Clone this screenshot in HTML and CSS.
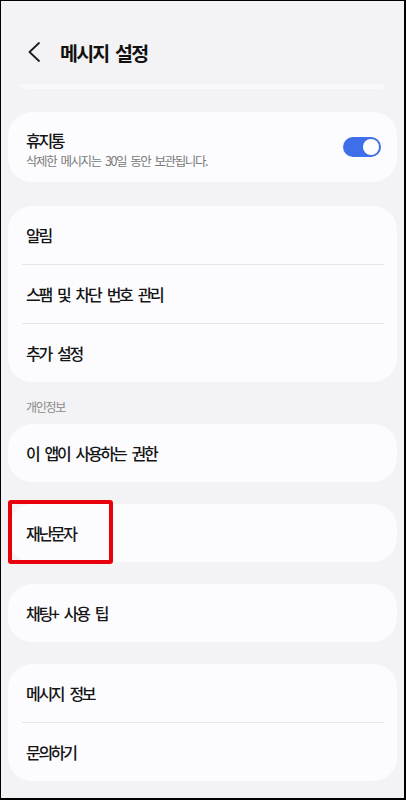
FILE: index.html
```html
<!DOCTYPE html>
<html lang="ko">
<head>
    <meta charset="UTF-8">
    <meta name="viewport" content="width=device-width, initial-scale=1.0">
    <title>메시지 설정</title>
    <link rel="stylesheet" href="styles.css">
</head>
<body>
    <div class="screen">
        <div class="topbar">
            <svg class="back-icon" width="12" height="20" viewBox="0 0 12 20">
                <polyline points="11,1 1.5,10 11,19" fill="none" stroke="#1c1c1c" stroke-width="1.8" stroke-linecap="round" stroke-linejoin="round"/>
            </svg>
            <div class="page-title">메시지 설정</div>
        </div>

        <div class="card-tail"></div>

        <div class="card card-trash">
            <div class="trash-text">
                <div class="item-label">휴지통</div>
                <div class="item-sub">삭제한 메시지는 30일 동안 보관됩니다.</div>
            </div>
            <div class="toggle on">
                <div class="knob"></div>
            </div>
        </div>

        <div class="card group-main">
            <div class="row"><span class="item-label">알림</span></div>
            <div class="divider"></div>
            <div class="row"><span class="item-label">스팸 및 차단 번호 관리</span></div>
            <div class="divider"></div>
            <div class="row"><span class="item-label">추가 설정</span></div>
        </div>

        <div class="section-title">개인정보</div>

        <div class="card">
            <div class="row"><span class="item-label">이 앱이 사용하는 권한</span></div>
        </div>

        <div class="card card-gap highlighted">
            <div class="row"><span class="item-label">재난문자</span></div>
            <div class="mark-box"></div>
        </div>

        <div class="card card-gap">
            <div class="row"><span class="item-label">채팅+ 사용 팁</span></div>
        </div>

        <div class="card card-gap">
            <div class="row"><span class="item-label">메시지 정보</span></div>
            <div class="divider"></div>
            <div class="row"><span class="item-label">문의하기</span></div>
        </div>
    </div>
</body>
</html>
```

FILE: styles.css
```css
* {
    margin: 0;
    padding: 0;
    box-sizing: border-box;
}

body {
    font-family: "Noto Sans CJK KR", "Noto Sans", sans-serif;
    background: #ffffff;
    color: #141414;
}

.screen {
    width: 406px;
    height: 800px;
    background: #f3f3f5;
    border: 1px solid #000;
    border-right-width: 2px;
    border-bottom-width: 2px;
    padding: 0 7px;
    overflow: hidden;
}

.topbar {
    display: flex;
    align-items: center;
    height: 38px;
    margin-top: 32px;
    margin-bottom: 13px;
    padding-left: 20px;
}

.back-icon {
    flex-shrink: 0;
}

.page-title {
    margin-left: 20px;
    font-size: 19.5px;
    font-weight: 700;
    letter-spacing: -1.8px;
    word-spacing: 3px;
    color: #111;
}

.card-tail {
    height: 5px;
    margin: 0 12px;
    background: #f9f9fb;
    border-radius: 0 0 16px 16px;
}

.card {
    background: #fcfcfe;
    border-radius: 24px;
    position: relative;
}

.card-trash {
    margin-top: 23px;
    height: 70px;
    display: flex;
    align-items: center;
    justify-content: space-between;
    padding: 0 16px 0 18px;
}

.trash-text {
    display: flex;
    flex-direction: column;
    gap: 2px;
    padding-top: 6px;
}

.item-label {
    font-size: 16px;
    font-weight: 500;
    letter-spacing: -2.3px;
    word-spacing: 4px;
    line-height: 20px;
    color: #151515;
}

.item-sub {
    font-size: 12.5px;
    letter-spacing: -1.4px;
    word-spacing: 2px;
    line-height: 18px;
    color: #7a7a7a;
}

.toggle {
    width: 38px;
    height: 20px;
    border-radius: 10px;
    background: #3e6fe8;
    position: relative;
}

.toggle .knob {
    position: absolute;
    top: 2px;
    right: 2px;
    width: 16px;
    height: 16px;
    border-radius: 50%;
    background: #fff;
}

.group-main {
    margin-top: 24px;
}

.row {
    height: 58px;
    display: flex;
    align-items: center;
    padding: 0 18px;
}

.divider {
    height: 1px;
    margin: 0 13px 0 14px;
    background: #e6e6e8;
}

.section-title {
    padding: 17px 0 9px 18px;
    font-size: 12px;
    line-height: 16px;
    letter-spacing: -1.3px;
    color: #8a8a8a;
}

.card-gap {
    margin-top: 22px;
}

.mark-box {
    position: absolute;
    left: 0;
    top: -4px;
    bottom: -2px;
    width: 105px;
    border: 4px solid #e8000d;
    border-radius: 3px;
}
```
